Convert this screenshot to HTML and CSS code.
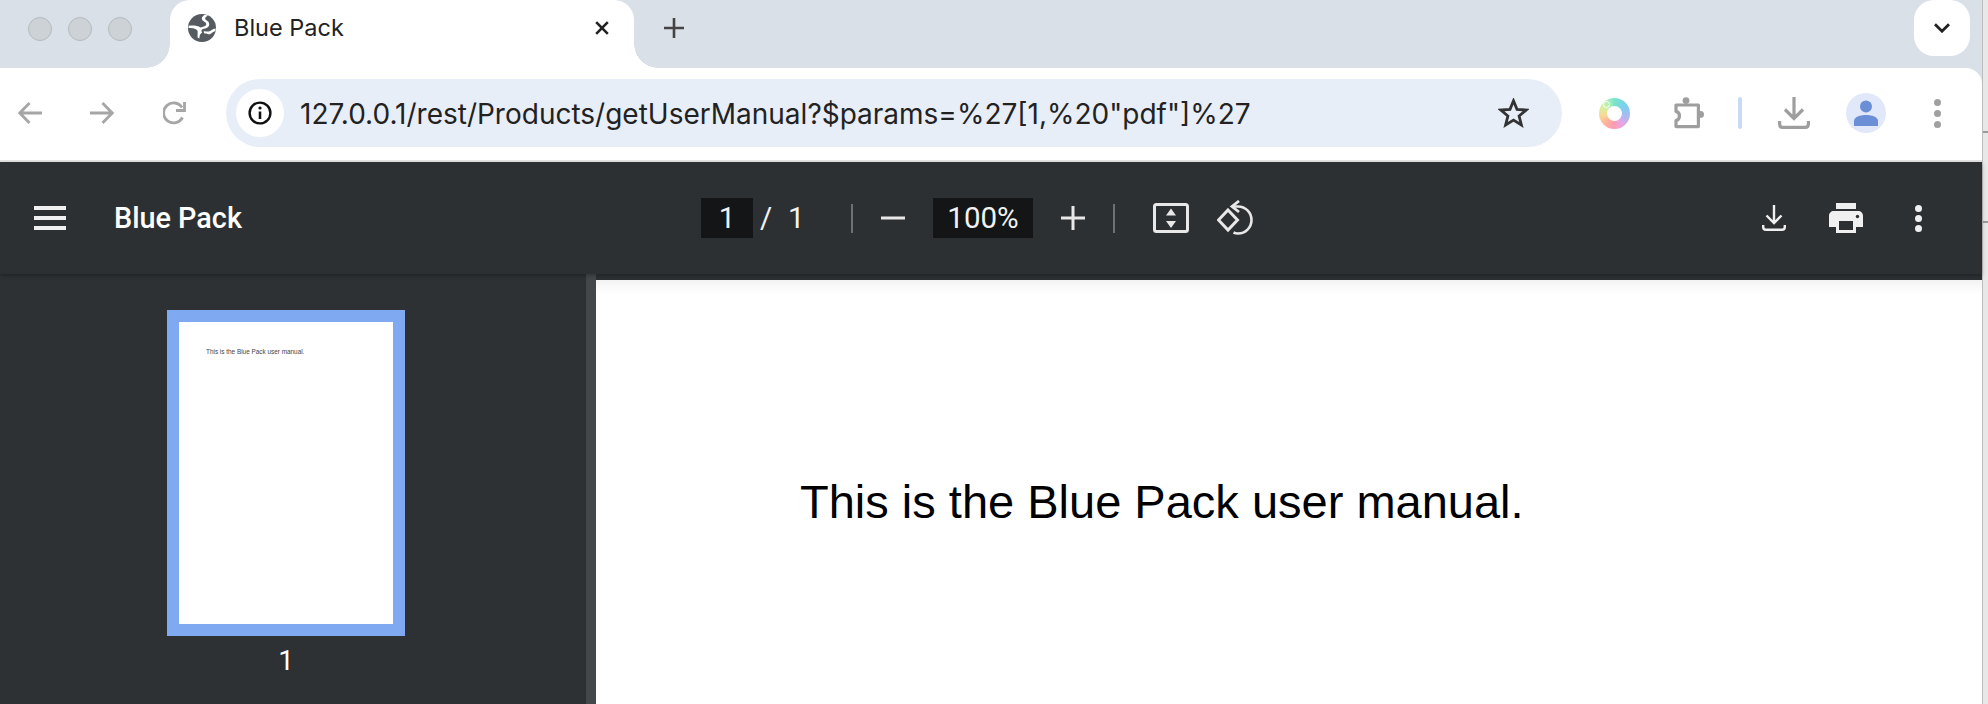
FILE: index.html
```html
<!DOCTYPE html>
<html lang="en">
<head>
<meta charset="utf-8">
<title>Blue Pack</title>
<link rel="stylesheet" href="styles.css">
</head>
<body>
<div class="screen">
  <div class="window">
    <header class="tabstrip">
      <div class="lights"><i class="light"></i><i class="light"></i><i class="light"></i></div>
      <div class="tab">
        <svg class="globe" width="28" height="28" viewBox="0 0 28 28"><circle cx="14" cy="14" r="14" fill="#565b61"/><path d="M17 .6C14 2.4 13 4.4 14.4 6.2 16 8 18.6 8 18.2 10.4 17.8 12.6 14.6 12.2 12.6 13.6 9.4 11.6 5.4 11.2 .8 11.8L.4 14C4.6 13.6 8 14.4 9.4 16.6 10 18 9.4 20.4 9.6 23.4L11.4 24.6C11.4 21.4 12.2 19.8 14.2 18.6 13 17 13.2 15.6 15 15 17.6 14.4 20.8 13.8 21.2 10.4 21.4 7 17.8 6.6 17.2 5 16.8 3.6 18.4 2.6 20 1.6Z" fill="#fff"/><path d="M27.6 14.4C24.4 14.8 22.8 17.2 20.6 17.4 18.8 17.6 17.2 16.8 15.6 17.4L16.4 19.6C18.4 19.2 20 20.6 21.8 20.2 23.8 19.6 25 17.6 27.4 17Z" fill="#fff"/></svg>
        <span class="tab-title">Blue Pack</span>
        <svg class="tab-close" width="14" height="14" viewBox="0 0 14 14"><path d="M1.2 1.2 12.8 12.8M12.8 1.2 1.2 12.8" stroke="#222" stroke-width="2.6" fill="none"/></svg>
      </div>
      <svg class="new-tab" width="20" height="20" viewBox="0 0 20 20"><path d="M10 0V20M0 10H20" stroke="#444" stroke-width="2.6" fill="none"/></svg>
      <div class="tab-search"><svg width="16" height="10" viewBox="0 0 16 10"><path d="M1 1.2 8 8.2 15 1.2" stroke="#222" stroke-width="2.8" fill="none"/></svg></div>
    </header>

    <nav class="toolbar">
      <svg class="nav-back" width="24" height="22" viewBox="0 0 24 22"><path d="M24 11H2M11.5 1 1.8 11 11.5 21" stroke="#a6a6a6" stroke-width="2.8" fill="none"/></svg>
      <svg class="nav-forward" width="24" height="22" viewBox="0 0 24 22"><path d="M0 11H22M12.5 1 22.2 11 12.5 21" stroke="#a6a6a6" stroke-width="2.8" fill="none"/></svg>
      <svg class="nav-reload" width="24" height="24" viewBox="0 0 24 24"><path d="M19.5 16.5A10 10 0 1 1 19 6.5" stroke="#a6a6a6" stroke-width="2.8" fill="none"/><path d="M21.5 1V9.5H13" stroke="#a6a6a6" stroke-width="2.8" fill="none"/></svg>
      <div class="omnibox">
        <div class="chip"><svg width="24" height="24" viewBox="0 0 24 24"><circle cx="12" cy="12" r="10.4" stroke="#111" stroke-width="2.4" fill="none"/><path d="M12 10.5V18" stroke="#111" stroke-width="2.6"/><circle cx="12" cy="7" r="1.6" fill="#111"/></svg></div>
        <span class="url">127.0.0.1/rest/Products/getUserManual?$params=%27[1,%20"pdf"]%27</span>
        <svg class="star" width="31" height="30" viewBox="0 0 31 30"><path d="M15.5 2.8 19 11.4 28.2 12 21.1 18 23.4 27 15.5 22.1 7.6 27 9.9 18 2.8 12 12 11.4Z" stroke="#333" stroke-width="2.8" fill="none" stroke-linejoin="miter"/></svg>
      </div>
      <div class="ring"><i class="ring-dot"></i></div>
      <svg class="puzzle" width="32" height="32" viewBox="0 0 32 32"><circle cx="14" cy="3.6" r="3.4" fill="#9e9e9e"/><circle cx="28.6" cy="17.4" r="3.4" fill="#9e9e9e"/><path d="M4 8H26.4V29.6H4V23.6C8.6 22.6 8.6 15.4 4 14.4Z" stroke="#9e9e9e" stroke-width="3.2" fill="none" stroke-linejoin="round"/></svg>
      <i class="tool-divider"></i>
      <svg class="tool-download" width="32" height="32" viewBox="0 0 32 32"><path d="M16 0V21M7 12.5 16 21.5 25 12.5" stroke="#9e9e9e" stroke-width="3.2" fill="none"/><path d="M1.6 24V27C1.6 29 2.6 30.4 4.6 30.4H27.4C29.4 30.4 30.4 29 30.4 27V24" stroke="#9e9e9e" stroke-width="3.2" fill="none"/></svg>
      <div class="avatar"><svg width="24" height="26" viewBox="0 0 24 26"><circle cx="12" cy="6.4" r="6" fill="#6b8fd6"/><path d="M0 26V21C0 17 6 15 12 15S24 17 24 21V26Z" fill="#6b8fd6"/></svg></div>
      <div class="kebab"><i></i><i></i><i></i></div>
    </nav>

    <section class="pdf-bar">
      <div class="pdf-left">
        <svg class="hamburger" width="32" height="24" viewBox="0 0 32 24"><path d="M0 2H32M0 12H32M0 22H32" stroke="#f0f0f0" stroke-width="4"/></svg>
        <span class="pdf-title">Blue Pack</span>
      </div>
      <div class="pdf-center">
        <span class="field field-page">1</span>
        <span class="slash">/</span>
        <span class="total">1</span>
        <i class="bar-divider bar-divider-a"></i>
        <svg class="zoom-out" width="24" height="4" viewBox="0 0 24 4"><path d="M0 2H24" stroke="#e8e8e8" stroke-width="3"/></svg>
        <span class="field field-zoom">100%</span>
        <svg class="zoom-in" width="24" height="24" viewBox="0 0 24 24"><path d="M0 12H24M12 0V24" stroke="#e8e8e8" stroke-width="3"/></svg>
        <i class="bar-divider bar-divider-b"></i>
        <svg class="fit" width="36" height="30" viewBox="0 0 36 30"><rect x="1.5" y="1.5" width="33" height="27" rx="2" stroke="#e8e8e8" stroke-width="3" fill="none"/><path d="M18 5.5 23 12.5H13ZM18 25 23 18H13Z" fill="#e8e8e8"/></svg>
        <svg class="rotate" width="36" height="36" viewBox="0 0 36 36"><path d="M11 10 20.5 20 11 30 1.5 20Z" stroke="#e8e8e8" stroke-width="3" fill="none"/><path d="M16 6.5H21A13.5 13.5 0 0 1 21 33.5C19 33.5 18 33.3 16.5 32.5" stroke="#e8e8e8" stroke-width="2.6" fill="none"/><path d="M22 1 15 6.5 22 12" stroke="#e8e8e8" stroke-width="2.8" fill="none"/></svg>
      </div>
      <div class="pdf-right">
        <svg class="pdf-download" width="24" height="26" viewBox="0 0 24 26"><path d="M12 0V18M4.5 10.5 12 18 19.5 10.5" stroke="#f0f0f0" stroke-width="2.4" fill="none"/><path d="M1.2 20V22C1.2 23.8 2.2 24.8 4 24.8H20C21.8 24.8 22.8 23.8 22.8 22V20" stroke="#f0f0f0" stroke-width="2.4" fill="none"/></svg>
        <svg class="print" width="34" height="30" viewBox="0 0 34 30"><path d="M7 0H27V6H7Z" fill="#f0f0f0"/><path d="M5 8H29C32 8 34 10 34 13V24H27V30H7V24H0V13C0 10 2 8 5 8ZM10 18V27H24V18Z" fill="#f0f0f0" fill-rule="evenodd"/><circle cx="28.5" cy="13.5" r="1.7" fill="#2d3033"/></svg>
        <div class="pdf-kebab"><i></i><i></i><i></i></div>
      </div>
    </section>

    <main class="workspace">
      <aside class="sidebar">
        <div class="thumb"><div class="thumb-page"><span class="thumb-text">This is the Blue Pack user manual.</span></div></div>
        <span class="thumb-num">1</span>
      </aside>
      <div class="scrollbar"></div>
      <div class="viewer"><div class="page"><p class="page-text">This is the Blue Pack user manual.</p></div></div>
    </main>
  </div>
  <div class="edge"></div>
</div>
</body>
</html>
```
FILE: styles.css
```css
* { box-sizing: border-box; }
html, body { margin: 0; padding: 0; height: 704px; overflow: hidden; background: #e8e8e8; }
svg { display: block; flex: none; }
i { display: block; }

.screen { display: flex; width: 1988px; height: 704px; }
.window { width: 1982px; height: 704px; display: flex; flex-direction: column; background: #d9e0e7; }
.edge {
  width: 6px; height: 704px; border-left: 1px solid #bdbdbd;
  background:
    linear-gradient(#9a9a9a, #9a9a9a) 0 131px / 100% 2px no-repeat,
    linear-gradient(#9a9a9a, #9a9a9a) 0 221px / 100% 2px no-repeat,
    #e8e8e8;
}

/* Tab strip */
.tabstrip { height: 68px; flex: none; display: flex; align-items: center; padding-left: 28px; }
.lights { display: flex; gap: 16px; margin-top: -10px; }
.light { width: 24px; height: 24px; border-radius: 50%; background: #cdd2d6; border: 1px solid #b6bbbf; }
.tab {
  position: relative; width: 464px; height: 68px; margin-left: 38px; padding: 0 25px 12px 18px;
  display: flex; align-items: center; background: #fff; border-radius: 20px 20px 0 0;
}
.tab::before, .tab::after { content: ""; position: absolute; bottom: 0; width: 24px; height: 24px; }
.tab::before { left: -24px; background: radial-gradient(circle at 0 0, transparent 23.5px, #fff 24px); }
.tab::after { right: -24px; background: radial-gradient(circle at 100% 0, transparent 23.5px, #fff 24px); }
.tab-title { margin-left: 18px; font: 400 23.5px/28px Inter, sans-serif; color: #222; }
.tab-close { margin-left: auto; }
.new-tab { margin: -12px 0 0 30px; }
.tab-search {
  width: 56px; height: 56px; margin: 0 12px 12px auto; border-radius: 20px; background: #fff;
  display: flex; align-items: center; justify-content: center;
}

/* Browser toolbar */
.toolbar {
  height: 94px; flex: none; display: flex; align-items: center; padding: 0 0 2px 18px;
  background: #fff; border-bottom: 2px solid #e3e3e3; border-top-right-radius: 16px;
}
.nav-forward { margin-left: 48px; }
.nav-reload { margin-left: 49px; }
.omnibox {
  width: 1336px; height: 68px; margin-left: 39px; padding: 0 33px 0 10px; border-radius: 34px;
  background: #e8eef8; display: flex; align-items: center;
}
.chip { width: 48px; height: 48px; border-radius: 50%; background: #fff; display: flex; align-items: center; justify-content: center; }
.url { margin: 2px 0 0 16px; font: 400 28px/36px Inter, sans-serif; color: #222; white-space: nowrap; }
.star { margin-left: auto; }
.ring {
  position: relative; width: 31px; height: 31px; margin-left: 37px; border-radius: 50%; flex: none;
  background: conic-gradient(#78e4cc 0deg, #7fcdf2 60deg, #b3b6f0 110deg, #e6a6e4 145deg, #ff9bb2 185deg, #fcb59a 225deg, #f6dc96 265deg, #d6f0a2 300deg, #a5eebc 335deg, #78e4cc 360deg);
}
.ring::after { content: ""; position: absolute; left: 8px; top: 8px; width: 15px; height: 15px; border-radius: 50%; background: #fff; }
.ring-dot { position: absolute; left: 4px; top: 3px; width: 7px; height: 7px; border-radius: 50%; border: 1px solid #fff; }
.puzzle { margin-left: 42px; }
.tool-divider { width: 4px; height: 32px; margin-left: 34px; border-radius: 2px; background: #c9daf5; flex: none; }
.tool-download { margin-left: 36px; }
.avatar { width: 40px; height: 40px; margin-left: 36px; border-radius: 50%; background: #e0e8fa; display: flex; align-items: flex-end; justify-content: center; padding-bottom: 7px; flex: none; }
.kebab { margin-left: 48px; display: flex; flex-direction: column; gap: 4px; }
.kebab i { width: 7px; height: 7px; border-radius: 50%; background: #a0a0a0; }

/* PDF toolbar */
.pdf-bar {
  position: relative; z-index: 1; height: 112px; flex: none; display: grid; grid-template-columns: 701px auto 1fr; align-items: center;
  background: #2d3033; color: #fff; box-shadow: 0 2px 4px rgba(0,0,0,.25);
}
.pdf-left { display: flex; align-items: center; padding-left: 34px; }
.pdf-title { margin-left: 48px; font: 500 28.8px/36px Roboto, sans-serif; color: #fff; }
.pdf-center { display: flex; align-items: center; font: 400 29.5px/40px Roboto, sans-serif; color: #f2f2f2; }
.field { height: 40px; background: #131517; text-align: center; }
.field-page { width: 52px; }
.field-zoom { width: 100px; margin-left: 28px; }
.slash { margin-left: 7px; width: 10px; }
.total { margin-left: 18px; width: 12px; }
.bar-divider { width: 2px; height: 29px; background: #6e7073; }
.bar-divider-a { margin-left: 51px; }
.bar-divider-b { margin-left: 28px; }
.zoom-out { margin-left: 28px; }
.zoom-in { margin-left: 28px; }
.fit { margin-left: 38px; }
.rotate { margin-left: 28px; }
.pdf-right { display: flex; align-items: center; justify-content: flex-end; padding-right: 60px; }
.print { margin-left: 43px; }
.pdf-kebab { margin-left: 52px; display: flex; flex-direction: column; gap: 3px; }
.pdf-kebab i { width: 7px; height: 7px; border-radius: 50%; background: #f0f0f0; }

/* Workspace */
.workspace { flex: 1; min-height: 0; display: flex; }
.sidebar { width: 586px; flex: none; padding: 36px 14px 0 0; display: flex; flex-direction: column; align-items: center; background: #2d3134; }
.thumb { width: 238px; height: 326px; padding: 12px; background: #7faaf1; flex: none; }
.thumb-page { height: 100%; background: #fff; padding: 26px 0 0 27px; }
.thumb-text { display: block; font: 400 6.4px/8px "Liberation Sans", sans-serif; color: #444; white-space: nowrap; }
.thumb-num { margin-top: 11px; font: 400 28px/28px Roboto, sans-serif; color: #fff; }
.scrollbar { width: 10px; flex: none; background: #44474a; }
.viewer { flex: 1; padding-top: 6px; background: #2d3033; min-width: 0; }
.page { height: 100%; background: linear-gradient(#f3f3f3, #fff 14px); padding: 194px 0 0 204px; }
.page-text { margin: 0; font: 400 47px/56px "Liberation Sans", sans-serif; color: #000; white-space: nowrap; }
```
